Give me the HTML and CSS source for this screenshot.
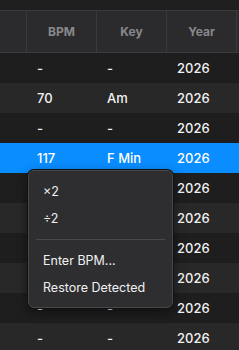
FILE: index.html
```html
<!DOCTYPE html>
<html lang="en">
<head>
    <meta charset="UTF-8">
    <meta name="viewport" content="width=device-width, initial-scale=1.0">
    <title>Tracks</title>
    <link rel="stylesheet" href="styles.css">
</head>
<body>
<div class="top-strip"></div>
<div class="table">
    <div class="row header">
        <div class="cell"></div>
        <div class="cell">BPM</div>
        <div class="cell">Key</div>
        <div class="cell">Year</div>
        <div class="cell"></div>
    </div>
    <div class="row odd"><div class="cell"></div><div class="cell">-</div><div class="cell">-</div><div class="cell">2026</div><div class="cell"></div></div>
    <div class="row even"><div class="cell"></div><div class="cell">70</div><div class="cell">Am</div><div class="cell">2026</div><div class="cell"></div></div>
    <div class="row odd"><div class="cell"></div><div class="cell">-</div><div class="cell">-</div><div class="cell">2026</div><div class="cell"></div></div>
    <div class="row selected"><div class="cell"></div><div class="cell">117</div><div class="cell">F Min</div><div class="cell">2026</div><div class="cell"></div></div>
    <div class="row odd"><div class="cell"></div><div class="cell">-</div><div class="cell">-</div><div class="cell">2026</div><div class="cell"></div></div>
    <div class="row even"><div class="cell"></div><div class="cell">-</div><div class="cell">-</div><div class="cell">2026</div><div class="cell"></div></div>
    <div class="row odd"><div class="cell"></div><div class="cell">-</div><div class="cell">-</div><div class="cell">2026</div><div class="cell"></div></div>
    <div class="row even"><div class="cell"></div><div class="cell">-</div><div class="cell">-</div><div class="cell">2026</div><div class="cell"></div></div>
    <div class="row odd"><div class="cell"></div><div class="cell">-</div><div class="cell">-</div><div class="cell">2026</div><div class="cell"></div></div>
    <div class="row even"><div class="cell"></div><div class="cell">-</div><div class="cell">-</div><div class="cell">2026</div><div class="cell"></div></div>
</div>

<div class="menu">
    <div class="menu-item">×2</div>
    <div class="menu-item">÷2</div>
    <div class="menu-sep"></div>
    <div class="menu-item">Enter BPM...</div>
    <div class="menu-item">Restore Detected</div>
</div>
</body>
</html>
```

FILE: styles.css
```css
body {
    margin: 0;
    width: 239px;
    height: 350px;
    overflow: hidden;
    background-color: #1e1e1e;
    font-family: Inter, "Liberation Sans", sans-serif;
    color: #f2f2f2;
    position: relative;
}

.top-strip {
    height: 10px;
    background-color: #1f1f1f;
}

.row {
    display: grid;
    grid-template-columns: 27px 70px 70px 70px 2px;
    height: 30px;
}

.cell {
    display: flex;
    align-items: center;
    padding-left: 10px;
    font-size: 13px;
    font-weight: 500;
    overflow: hidden;
    white-space: nowrap;
}

.header {
    height: 41px;
    background-color: #2b2b2d;
    border-top: 1px solid #3a3a3c;
    border-bottom: 1px solid #3a3a3c;
}

.header .cell {
    justify-content: center;
    padding-left: 0;
    font-size: 12px;
    font-weight: 700;
    color: #88888c;
    border-right: 1px solid #3a3a3c;
}

.header .cell:last-child {
    border-right: none;
}

.odd {
    background-color: #1e1e1e;
}

.even {
    background-color: #282828;
}

.selected {
    background-color: #0a8dff;
    color: #ffffff;
}

.menu {
    position: absolute;
    left: 28px;
    top: 170px;
    width: 145px;
    box-sizing: border-box;
    padding: 7px 0 6px 0;
    background-color: #2e2e30;
    border: 1px solid #48484a;
    border-radius: 6px;
    box-shadow: 0 0 0 1px #111, 0 4px 12px rgba(0, 0, 0, 0.5);
}

.menu-item {
    height: 27px;
    line-height: 27px;
    padding-left: 14px;
    font-size: 12.5px;
    color: #f0f0f0;
}

.menu-sep {
    height: 1px;
    margin: 7px 7px 7px 7px;
    background-color: #48484a;
}
```
